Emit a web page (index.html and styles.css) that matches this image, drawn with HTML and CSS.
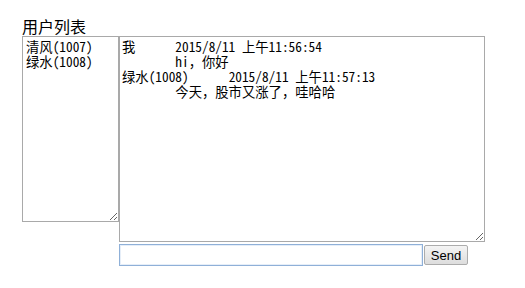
FILE: index.html
```html
<!DOCTYPE html>
<html lang="zh-CN">
<head>
    <meta charset="UTF-8">
    <title>聊天室</title>
    <link rel="stylesheet" href="styles.css">
</head>
<body>
    <div class="chat">
        <div class="title">用户列表</div>
        <div class="panes">
            <textarea class="users">清风(1007)
绿水(1008)</textarea>
            <div class="main">
                <textarea class="log">我	2015/8/11 上午11:56:54
	hi，你好
绿水(1008)	2015/8/11 上午11:57:13
	今天，股市又涨了，哇哈哈</textarea>
                <div class="send-row">
                    <input type="text" class="msg" autofocus>
                    <button type="button" class="send">Send</button>
                </div>
            </div>
        </div>
    </div>
</body>
</html>
```

FILE: styles.css
```css
body {
    margin: 0;
    background: #fff;
}

.chat {
    padding: 16px 0 0 22px;
}

.title {
    font-family: "Noto Sans CJK SC", sans-serif;
    font-size: 16px;
    line-height: 20px;
    color: #000;
}

.panes {
    display: flex;
    align-items: flex-start;
}

textarea {
    box-sizing: border-box;
    margin: 0;
    padding: 2px 3px;
    border: 1px solid #a9a9a9;
    font-family: "Noto Sans Mono CJK SC", "Noto Sans CJK SC", monospace;
    font-size: 13.333px;
    line-height: 15px;
    color: #000;
    tab-size: 8;
    outline: none;
}

.users {
    width: 97px;
    height: 186px;
}

.log {
    display: block;
    width: 366px;
    height: 206px;
    padding-left: 2px;
}

.send-row {
    display: flex;
    align-items: center;
    margin-top: 2px;
}

.msg {
    box-sizing: border-box;
    width: 304px;
    height: 22px;
    margin: 0;
    padding: 1px 2px;
    border: 1px solid #8fb0d8;
    box-shadow: inset 0 0 0 1px #e6eef8;
    outline: none;
    font-family: "Liberation Sans", sans-serif;
    font-size: 13px;
}

.send {
    box-sizing: border-box;
    width: 44px;
    height: 20px;
    margin: 0 0 0 1px;
    padding: 0;
    border: 1px solid #acacac;
    border-radius: 2px;
    background: linear-gradient(#f4f4f4, #dddddd);
    font-family: "Liberation Sans", sans-serif;
    font-size: 13px;
    color: #000;
}
```
